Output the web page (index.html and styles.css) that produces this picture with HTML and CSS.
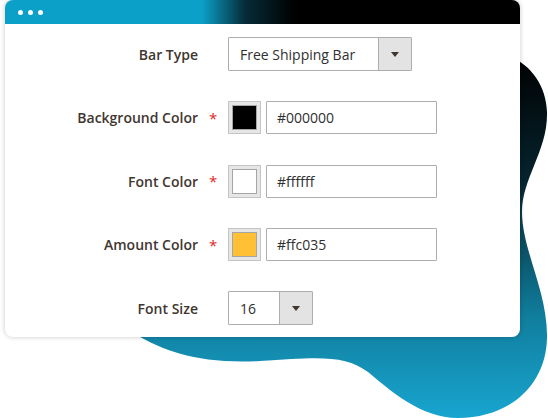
FILE: index.html
```html
<!DOCTYPE html>
<html>
<head>
<meta charset="utf-8">
<link rel="stylesheet" href="styles.css">
</head>
<body>
<div class="stage">
  <svg class="blob" width="548" height="418" viewBox="0 0 548 418" aria-hidden="true">
    <defs>
      <linearGradient id="bg" x1="0" y1="50" x2="0" y2="418" gradientUnits="userSpaceOnUse">
        <stop offset="0" stop-color="#000000"/>
        <stop offset="0.35" stop-color="#06232d"/>
        <stop offset="0.72" stop-color="#107d9c"/>
        <stop offset="1" stop-color="#18a5cf"/>
      </linearGradient>
    </defs>
    <path fill="url(#bg)" d="M480,50 C520,50 546,78 547,112 C548,150 522,178 522,212 C522,250 548,292 547,338 C546,385 510,418 458,418 C420,418 390,390 368,372 C345,355 320,357 260,361 C200,364 165,352 135,334 L135,300 L480,300 Z"/>
  </svg>
  <div class="card">
    <div class="titlebar">
      <span class="dot"></span><span class="dot"></span><span class="dot"></span>
    </div>
    <div class="form">
      <div class="label">Bar Type</div>
      <div class="star"></div>
      <div class="control">
        <div class="select wide">
          <span class="select-text">Free Shipping Bar</span>
          <span class="select-btn"><span class="caret"></span></span>
        </div>
      </div>

      <div class="label">Background Color</div>
      <div class="star">*</div>
      <div class="control">
        <div class="swatch"><div class="swatch-fill black"></div></div>
        <div class="input">#000000</div>
      </div>

      <div class="label">Font Color</div>
      <div class="star">*</div>
      <div class="control">
        <div class="swatch"><div class="swatch-fill white"></div></div>
        <div class="input">#ffffff</div>
      </div>

      <div class="label">Amount Color</div>
      <div class="star">*</div>
      <div class="control">
        <div class="swatch"><div class="swatch-fill amber"></div></div>
        <div class="input">#ffc035</div>
      </div>

      <div class="label">Font Size</div>
      <div class="star"></div>
      <div class="control">
        <div class="select narrow">
          <span class="select-text">16</span>
          <span class="select-btn"><span class="caret"></span></span>
        </div>
      </div>
    </div>
  </div>
</div>
</body>
</html>
```

FILE: styles.css
```css
html, body {
  margin: 0;
  padding: 0;
  background: #ffffff;
}
body {
  width: 548px;
  height: 418px;
  overflow: hidden;
  font-family: "Open Sans", "Noto Sans", sans-serif;
}
.stage {
  position: relative;
  width: 548px;
  height: 418px;
}
.blob {
  position: absolute;
  left: 0;
  top: 0;
}
.card {
  position: relative;
  margin-left: 5px;
  width: 515px;
  height: 337px;
  background: #ffffff;
  border-radius: 8px;
  box-shadow: 0 0 5px rgba(0, 0, 0, 0.22);
  overflow: hidden;
}
.titlebar {
  height: 24px;
  background: linear-gradient(90deg, #0ba0c8 0, #0ba0c8 197px, #062c38 240px, #000000 290px, #000000 100%);
  display: flex;
  align-items: center;
  gap: 5px;
  padding-left: 13px;
}
.dot {
  width: 5px;
  height: 5px;
  border-radius: 50%;
  background: #ffffff;
}
.form {
  display: grid;
  grid-template-columns: 193px 30px 1fr;
  grid-auto-rows: 34px;
  row-gap: 29.5px;
  padding-top: 13px;
}
.label {
  display: flex;
  align-items: center;
  justify-content: flex-end;
  font-size: 14px;
  font-weight: 600;
  color: #41362f;
}
.star {
  display: flex;
  align-items: center;
  padding-left: 11px;
  font-size: 15px;
  color: #e22626;
}
.control {
  display: flex;
  align-items: center;
  gap: 5px;
}
.select {
  box-sizing: border-box;
  height: 34px;
  display: flex;
  border: 1px solid #adadad;
  border-radius: 1px;
  background: #ffffff;
}
.select.wide { width: 184px; }
.select.narrow { width: 85px; }
.select-text {
  flex: 1;
  display: flex;
  align-items: center;
  padding-left: 11px;
  font-size: 14px;
  color: #303030;
}
.select-btn {
  width: 32px;
  border-left: 1px solid #adadad;
  background: #e3e3e3;
  display: flex;
  align-items: center;
  justify-content: center;
}
.caret {
  width: 0;
  height: 0;
  border-left: 4px solid transparent;
  border-right: 4px solid transparent;
  border-top: 5px solid #41362f;
}
.swatch {
  box-sizing: border-box;
  width: 33px;
  height: 33px;
  padding: 3px;
  border: 1px solid #c4c4c4;
  background: #e6e6e6;
  display: flex;
}
.swatch-fill {
  flex: 1;
  border: 1px solid #a5a5a5;
}
.swatch-fill.black { background: #000000; }
.swatch-fill.white { background: #ffffff; }
.swatch-fill.amber { background: #ffc035; }
.input {
  box-sizing: border-box;
  width: 171px;
  height: 33px;
  border: 1px solid #adadad;
  border-radius: 1px;
  display: flex;
  align-items: center;
  padding-left: 10px;
  font-size: 14px;
  color: #303030;
}
```
